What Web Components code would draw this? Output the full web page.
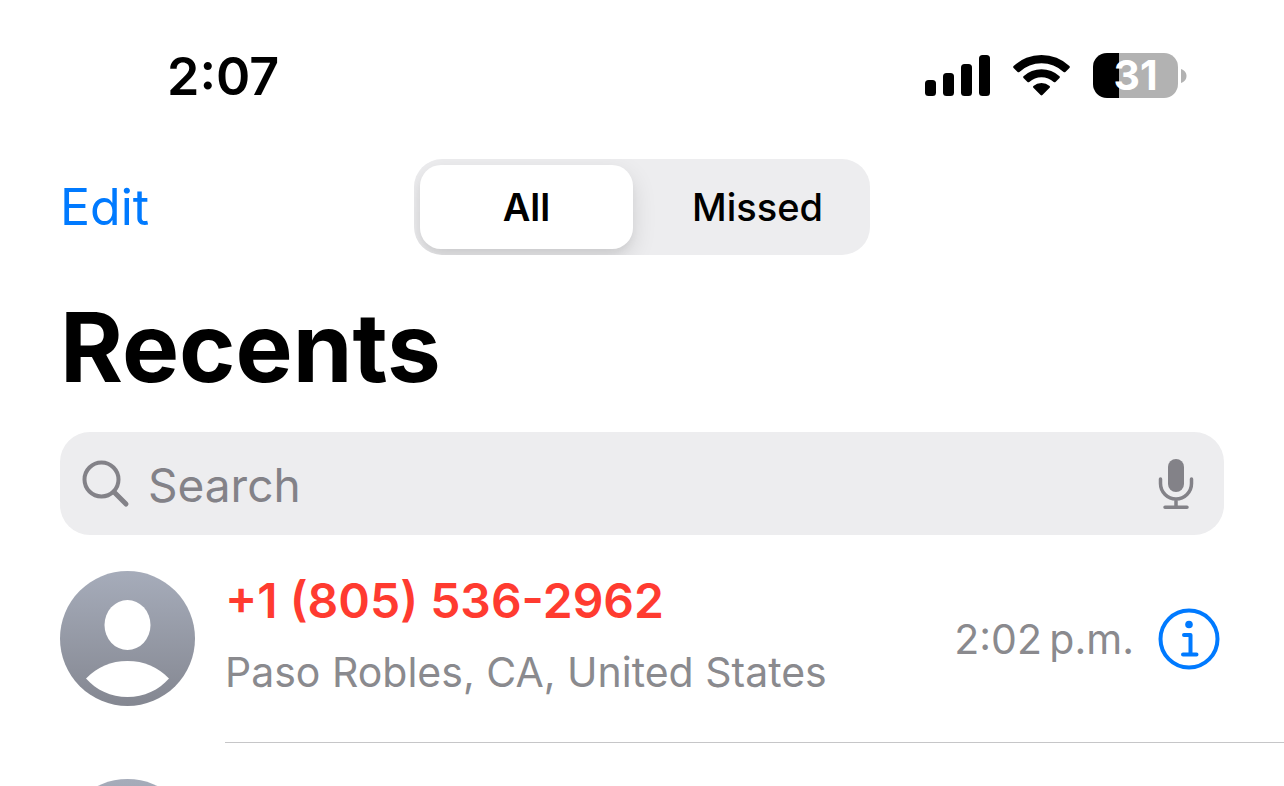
<!DOCTYPE html>
<html lang="en">
<head>
<meta charset="utf-8">
<meta name="viewport" content="width=device-width, initial-scale=1">
<title>Recents</title>
<style>
  body {
    margin: 0;
    height: 100vh;
    overflow: hidden;
    background: #fff;
    color: #000;
    font-family: Inter, "Liberation Sans", sans-serif;
  }
</style>
</head>
<body>
<phone-recents></phone-recents>

<script>
class BaseElement extends HTMLElement {
  constructor () {
    super();
    this.attachShadow({ mode: 'open' });
  }
  connectedCallback () {
    var template = document.createElement('template');
    template.innerHTML = this.htmlTemplate;
    this.shadowRoot.replaceChildren(template.content.cloneNode(true));
  }
}

class BatteryLevel extends BaseElement {
  get htmlTemplate () {
    return `<style>
        :host {
          display: flex;
          align-items: center;
          gap: 3px;
        }
        .level {
          width: 85px;
          height: 45px;
          border-radius: 14px;
          background: linear-gradient(to right, #000 ${this.getAttribute('level')}%, #b2b2b2 0);
          color: #fff;
          font-size: 41px;
          font-weight: 700;
          line-height: 45px;
          text-align: center;
        }
        svg {
          display: block;
        }
      </style>
      <div class="level"><slot></slot></div>
      <svg width="6" height="16" viewBox="0 0 6 16" aria-hidden="true">
        <path d="M0 1C3 2 5.500 4.500 5.500 8S3 14 0 15Z" fill="#b2b2b2"/>
      </svg>`;
  }
}

class StatusBar extends BaseElement {
  get htmlTemplate () {
    return `<style>
        :host {
          display: flex;
          justify-content: space-between;
          align-items: flex-end;
          padding: 45px 97px 0 167px;
        }
        time {
          font-size: 52px;
          font-weight: 600;
          line-height: 64px;
        }
        .icons {
          display: flex;
          align-items: center;
          gap: 23px;
          padding-bottom: 11px;
        }
        svg {
          display: block;
        }
      </style>
      <time><slot></slot></time>
      <div class="icons">
        <svg width="65" height="41" viewBox="0 0 65 41" role="img" aria-label="Signal">
          <rect y="25" width="11" height="16" rx="3.500"/>
          <rect x="18" y="18" width="11" height="23" rx="3.500"/>
          <rect x="36" y="9" width="11" height="32" rx="3.500"/>
          <rect x="54" width="11" height="41" rx="3.500"/>
        </svg>
        <svg width="57" height="43" viewBox="0 0 57 42" role="img" aria-label="Wi-Fi">
          <path d="M0.600 11.600Q-0.300 12.500 0.600 13.400L4.600 17.400Q5.500 18.200 6.400 17.400A32.500 32.500 0 0 1 50.600 17.400Q51.500 18.200 52.400 17.400L56.400 13.400Q57.300 12.500 56.400 11.600A40.500 40.500 0 0 0 0.600 11.600Z"/>
          <path d="M10.500 21.700Q9.600 22.600 10.500 23.400L14.500 27.400Q15.400 28.200 16.300 27.400A18.200 18.200 0 0 1 40.700 27.400Q41.600 28.200 42.500 27.400L46.500 23.400Q47.400 22.600 46.500 21.700A26.500 26.500 0 0 0 10.500 21.700Z"/>
          <path d="M20.400 31.400Q19.500 32.400 20.400 33.300L27.600 40.500Q28.500 41.400 29.400 40.500L36.600 33.300Q37.500 32.400 36.600 31.400A12.400 12.400 0 0 0 20.400 31.400Z"/>
        </svg>
        <battery-level level="31">31</battery-level>
      </div>`;
  }
}

class SegmentedControl extends BaseElement {
  get htmlTemplate () {
    var segments = this.getAttribute('options').split(',').map((name, index) =>
      `<button type="button" aria-pressed="${index == 0}">${name}</button>`);
    return `<style>
        :host {
          display: grid;
          grid-template-columns: 213px 213px;
          gap: 18px;
          padding: 6px;
          border-radius: 28px;
          background: #ededef;
          overflow: hidden;
        }
        button {
          height: 84px;
          padding: 0;
          border: none;
          border-radius: 21px;
          background: none;
          color: #000;
          font: 500 38px/84px Inter, "Liberation Sans", sans-serif;
        }
        button[aria-pressed="true"] {
          background: #fff;
          font-weight: 600;
          box-shadow: 0 9px 24px rgba(0, 0, 0, .12), 0 6px 6px rgba(0, 0, 0, .04);
        }
      </style>
      ${segments.join('')}`;
  }
  connectedCallback () {
    super.connectedCallback();
    var buttons = [...this.shadowRoot.querySelectorAll('button')];
    buttons.forEach(button => {
      button.onclick = () => {
        buttons.forEach(item => item.setAttribute('aria-pressed', item == button));
      };
    });
  }
}

class NavBar extends BaseElement {
  get htmlTemplate () {
    return `<style>
        :host {
          display: grid;
          grid-template-columns: 1fr auto 1fr;
          align-items: center;
          padding: 50px 60px 0;
        }
        button {
          justify-self: start;
          padding: 0;
          border: none;
          background: none;
          color: #007aff;
          font: 400 50px/60px Inter, "Liberation Sans", sans-serif;
        }
      </style>
      <button type="button">Edit</button>
      <slot></slot>`;
  }
}

class SearchField extends BaseElement {
  get htmlTemplate () {
    return `<style>
        :host {
          display: flex;
          align-items: center;
          gap: 18px;
          height: 103px;
          margin: 0 60px;
          padding: 0 30px 0 22px;
          border-radius: 30px;
          background: #ededef;
          color: #838288;
        }
        input {
          flex: 1;
          min-width: 0;
          padding: 2px 0 0;
          border: none;
          outline: none;
          background: none;
          color: #000;
          font: 400 46px/60px Inter, "Liberation Sans", sans-serif;
        }
        input::placeholder {
          color: #838288;
          opacity: 1;
        }
        button {
          padding: 0;
          border: none;
          background: none;
          color: inherit;
        }
        svg {
          display: block;
          fill: none;
          stroke: currentColor;
          stroke-linecap: round;
        }
      </style>
      <svg width="48" height="48" viewBox="0 0 48 48" stroke-width="4" aria-hidden="true">
        <circle cx="19.500" cy="19.500" r="17"/>
        <path d="M32 32L44 44" stroke-width="5"/>
      </svg>
      <input type="search" placeholder="Search" aria-label="Search">
      <button type="button" aria-label="Dictate">
        <svg width="36" height="52" viewBox="0 0 36 52" stroke-width="3.500">
          <rect x="10" y="1" width="16" height="33" rx="8" fill="currentColor" stroke="none"/>
          <path d="M2.500 21V25.500A15.500 15.500 0 0 0 33.500 25.500V21M18 41V49M7 49.300H29"/>
        </svg>
      </button>`;
  }
}

class ContactAvatar extends BaseElement {
  get htmlTemplate () {
    return `<style>
        :host {
          display: block;
        }
        svg {
          display: block;
        }
      </style>
      <svg width="135" height="135" viewBox="0 0 135 135" aria-hidden="true">
        <defs>
          <linearGradient id="shade" x1="0" y1="0" x2="0" y2="1">
            <stop offset="0" stop-color="#a6acba"/>
            <stop offset="1" stop-color="#848791"/>
          </linearGradient>
        </defs>
        <circle cx="67.500" cy="67.500" r="67.500" fill="url(#shade)"/>
        <ellipse cx="67.500" cy="54" rx="23" ry="25" fill="#fff"/>
        <path d="M26 107.500C37 96 51 90 67.500 90S98 96 109 107.500C99 119 84 126 67.500 126S36 119 26 107.500Z" fill="#fff"/>
      </svg>`;
  }
}

class CallRow extends BaseElement {
  get htmlTemplate () {
    return `<style>
        :host {
          display: flex;
          gap: 30px;
          padding-left: 60px;
        }
        contact-avatar {
          padding-top: 36px;
        }
        .content {
          flex: 1;
          display: flex;
          align-items: center;
          gap: 24px;
          height: 207px;
          padding-right: 64px;
          border-bottom: 1px solid #c6c6c8;
        }
        .caller {
          flex: 1;
          display: grid;
          gap: 14px;
          padding-bottom: 8px;
        }
        .number {
          color: #ff3b30;
          font-size: 48px;
          font-weight: 600;
          line-height: 60px;
        }
        .place, time {
          color: #8a8a8e;
          font-size: 41px;
          line-height: 54px;
        }
        button {
          padding: 0;
          border: none;
          background: none;
          color: #007aff;
        }
        svg {
          display: block;
          fill: none;
          stroke: currentColor;
          stroke-linecap: round;
          stroke-linejoin: round;
        }
      </style>
      <contact-avatar></contact-avatar>
      <div class="content">
        <div class="caller">
          <div class="number"><slot name="number"></slot></div>
          <div class="place"><slot name="place"></slot></div>
        </div>
        <time><slot name="time"></slot></time>
        <button type="button" aria-label="Call details">
          <svg width="62" height="62" viewBox="0 0 62 62" stroke-width="4">
            <circle cx="31" cy="31" r="28.500"/>
            <circle cx="31" cy="16.500" r="3.800" fill="currentColor" stroke="none"/>
            <path d="M26 27H32.500V46.500M25 46.500H38.500" stroke-width="4"/>
          </svg>
        </button>
      </div>`;
  }
}

class PhoneRecents extends BaseElement {
  get htmlTemplate () {
    return `<style>
        :host {
          display: block;
          height: 100%;
          overflow: hidden;
        }
        h1 {
          margin: 0;
          padding: 32px 60px 25px;
          font-size: 96px;
          font-weight: 700;
          line-height: 120px;
        }
      </style>
      <status-bar>2:07</status-bar>
      <nav-bar>
        <segmented-control options="All,Missed" role="group" aria-label="Calls shown"></segmented-control>
      </nav-bar>
      <h1>Recents</h1>
      <search-field></search-field>
      <call-row>
        <span slot="number">+1 (805) 536-2962</span>
        <span slot="place">Paso Robles, CA, United States</span>
        <span slot="time">2:02&#8239;p.m.</span>
      </call-row>
      <call-row></call-row>`;
  }
}

window.customElements.define('battery-level', BatteryLevel);
window.customElements.define('status-bar', StatusBar);
window.customElements.define('segmented-control', SegmentedControl);
window.customElements.define('nav-bar', NavBar);
window.customElements.define('search-field', SearchField);
window.customElements.define('contact-avatar', ContactAvatar);
window.customElements.define('call-row', CallRow);
window.customElements.define('phone-recents', PhoneRecents);
</script>
</body>
</html>
